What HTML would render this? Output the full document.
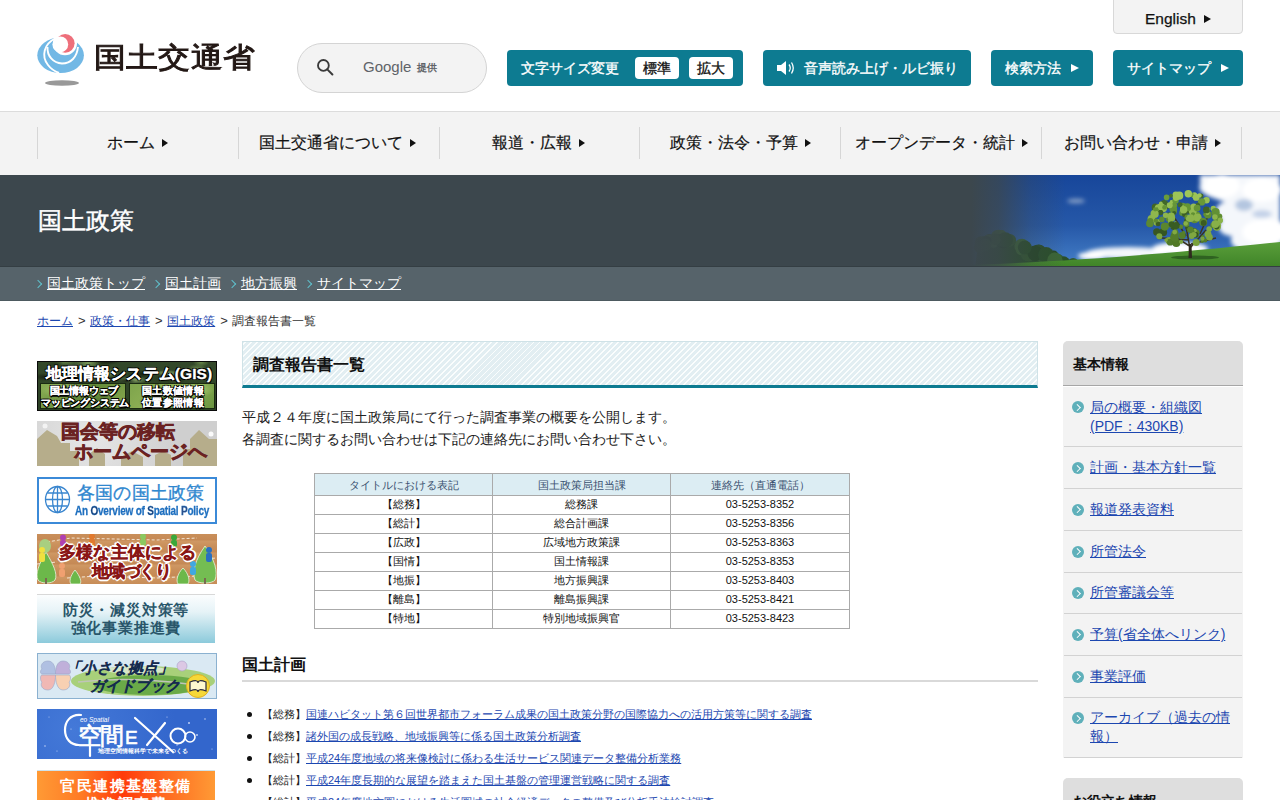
<!DOCTYPE html>
<html lang="ja">
<head>
<meta charset="utf-8">
<title>調査報告書一覧 - 国土政策</title>
<style>
*{box-sizing:border-box;margin:0;padding:0}
html,body{width:1280px;height:800px;overflow:hidden;background:#fff}
body{font-family:"Liberation Sans",sans-serif;color:#222;position:relative}
.abs{position:absolute}
a{color:#1c47b0}
/* header */
#hdr{position:absolute;left:0;top:0;width:1280px;height:112px;background:#fff;border-bottom:1px solid #dcdcdc}
.logo-text{position:absolute;left:94px;top:35px;font-size:32px;line-height:44px;color:#231815;-webkit-text-stroke:1.1px #231815;letter-spacing:0.2px;transform:scaleY(0.88);transform-origin:0 22px}
.search{position:absolute;left:297px;top:43px;width:190px;height:50px;border:1px solid #d4d4d4;border-radius:25px;background:#f3f3f3}
.btn{position:absolute;top:50px;height:36px;background:#0d7b91;border-radius:4px;color:#fff;font-size:14px;line-height:36px;-webkit-text-stroke:0.35px #fff}
.btn .t{position:absolute;top:0;white-space:nowrap}
.tri{position:absolute;width:0;height:0;border-style:solid}
.wbox{position:absolute;top:7px;width:44px;height:22px;background:#fff;border-radius:4px;color:#111;font-size:14px;line-height:22px;text-align:center;-webkit-text-stroke:0.35px #111}
#eng{position:absolute;left:1113px;top:-4px;width:130px;height:38px;background:#f3f3f3;border:1px solid #d8d8d8;border-radius:0 0 4px 4px}
/* nav */
#nav{position:absolute;left:0;top:112px;width:1280px;height:63px;background:#f3f3f3}
.sep{position:absolute;top:15px;width:1px;height:32px;background:#d6d6d6}
.nt{display:inline-block;width:0;height:0;border-style:solid;border-width:4px 0 4px 6.5px;border-color:transparent transparent transparent #111;margin-left:7px;vertical-align:1px}
.nv{position:absolute;top:0;height:63px;line-height:62px;font-size:16px;color:#111;white-space:nowrap;-webkit-text-stroke:0.2px #111}
/* banner */
#ban{position:absolute;left:0;top:175px;width:1280px;height:92px;background:#3c474d;overflow:hidden}
#subnav{position:absolute;left:0;top:267px;width:1280px;height:34px;background:#56636a;border-bottom:1px solid #4d5a60}
#ban:after{content:"";position:absolute;left:0;bottom:0;width:1280px;height:1px;background:#343e43}
.sn{position:absolute;top:0;line-height:32px;font-size:14px;color:#fff;white-space:nowrap}
.sn a{color:#fff}
.chev{position:absolute;top:13.5px;width:6px;height:6px;border-right:1.5px solid #5fc0cc;border-top:1.5px solid #5fc0cc;transform:rotate(45deg)}
/* breadcrumb */
.gt{font-weight:normal;font-size:13px;margin:0 4.5px 0 5px}
.bc{position:absolute;left:37px;top:312px;font-size:12px;line-height:18px;color:#333;white-space:nowrap}
/* main */
.h1box{position:absolute;left:242px;top:341px;width:796px;height:47px;border:1px solid #cfe2e7;border-bottom:3px solid #0d7b91;
background:repeating-linear-gradient(-45deg,#e2eef2 0,#e2eef2 2.9px,#fafdfd 2.9px,#fafdfd 4.25px)}
.h1box h1{position:absolute;left:10px;top:1px;line-height:44px;font-size:16px;font-weight:bold;color:#111}
.p{position:absolute;left:242px;font-size:14px;line-height:22px;color:#222;white-space:nowrap}
table.t{position:absolute;left:314px;top:473px;width:536px;border-collapse:collapse;table-layout:fixed;font-size:11px;color:#111}
table.t td,table.t th{border:1px solid #aaa;text-align:center;height:19px;line-height:16px;padding:0;vertical-align:top;font-weight:normal}
table.t th{background:#dcedf3;color:#3a5170;height:22px;padding-top:3px}
.h2{position:absolute;left:242px;top:650px;width:796px;height:32px;border-bottom:2px solid #d9d9d9}
.h2 span{position:absolute;left:0;top:1.5px;font-size:16px;font-weight:bold;line-height:26px;color:#111}
ul.lst{position:absolute;left:242px;top:703px;list-style:none;font-size:11px;color:#222}
.bk{margin-left:-4.5px}.bk2{margin-right:0.5px}
ul.lst li{position:relative;height:22.1px;line-height:22px;padding-left:24px;white-space:nowrap}
ul.lst li:before{content:"";position:absolute;left:5px;top:9px;width:5px;height:5px;border-radius:50%;background:#111}
/* sidebar */
.side{position:absolute;left:1063px;width:180px;background:#f3f3f3;border-radius:5px 5px 0 0}
.side .hd{height:45px;background:#dedede;border-bottom:1px solid #a6a6a6;box-shadow:0 1px 0 #fff;border-radius:5px 5px 0 0;font-size:14px;font-weight:bold;line-height:46px;padding-left:10px;color:#111}
.side .it{position:relative;border-bottom:1px solid #d2d2d2;margin:0 1px;padding:10.85px 10px 10.85px 26px;font-size:14px;line-height:19px}
.side .hd+.it{padding-top:11.6px}
.side .hd+.it:before{top:15.4px}.side .hd+.it:after{top:18.9px}
.side .it:before{content:"";position:absolute;left:8px;top:14.7px;width:12px;height:12px;border-radius:50%;background:#5fb0ba}
.side .it:after{content:"";position:absolute;left:11px;top:18.2px;width:3.6px;height:3.6px;border-right:1.1px solid #fff;border-top:1.1px solid #fff;transform:rotate(45deg)}
/* left banners */
.bn{position:absolute;left:37px;width:180px;overflow:hidden}
.gtx{color:#fff;font-weight:bold;white-space:nowrap;text-shadow:0 0 1px #000,1px 1px 0 #000,-1px -1px 0 #000,1px -1px 0 #000,-1px 1px 0 #000}
.gtx2{color:#fff;font-weight:bold;white-space:nowrap;text-shadow:1px 1px 0 #000,-1px -1px 0 #000,1px -1px 0 #000,-1px 1px 0 #000,0 1.5px 0 #000,1.5px 0 0 #000}
.wtx{color:#8a1616;font-weight:bold;white-space:nowrap;-webkit-text-stroke:0.4px #8a1616;text-shadow:1.3px 1.3px 0 #fff,-1.3px -1.3px 0 #fff,1.3px -1.3px 0 #fff,-1.3px 1.3px 0 #fff,0 1.6px 0 #fff,1.6px 0 0 #fff,0 -1.6px 0 #fff,-1.6px 0 0 #fff}
</style>
</head>
<body>
<div id="hdr">
  <svg class="abs" style="left:30px;top:28px" width="62" height="62" viewBox="30 28 62 62">
    <ellipse cx="62" cy="83" rx="17" ry="2.8" fill="#999"/>
    <ellipse cx="60.6" cy="55.3" rx="23.3" ry="17.8" fill="#72b8e5"/>
    <path d="M72 30 L76 38 C78 39 80 41 84 43 L90 30 Z" fill="#fff"/>
    <circle cx="65" cy="43.3" r="12" fill="#fff"/>
    <path d="M55 38.5 C44 44 41 56 48 65 C51 69 55 71.5 59 73" fill="none" stroke="#fff" stroke-width="1.9"/>
    <path d="M47.5 47 C47 56 53 63 62 63.5 C71 63.5 77 57 78 47" fill="none" stroke="#fff" stroke-width="1.9"/>
    <circle cx="65.2" cy="43.3" r="9.4" fill="#ee6f7b"/>
    <circle cx="60.3" cy="44.4" r="7.9" fill="#fff"/>
  </svg>
  <div class="logo-text">国土交通省</div>
  <div class="search">
    <svg class="abs" style="left:18px;top:14px" width="20" height="20" viewBox="0 0 20 20"><circle cx="7.4" cy="7.4" r="5.4" fill="none" stroke="#3a3a3a" stroke-width="1.85"/><path d="M11.3 11.4 L16.4 16.5" stroke="#3a3a3a" stroke-width="2" stroke-linecap="round"/></svg>
    <div class="abs" style="left:65px;top:13px;font-size:15px;line-height:20px;color:#5f6368">Google</div>
    <div class="abs" style="left:119px;top:17px;font-size:10px;line-height:14px;color:#5f6368;font-weight:bold">提供</div>
  </div>
  <div class="btn" style="left:507px;width:236px">
    <span class="t" style="left:14px">文字サイズ変更</span>
    <div class="wbox" style="left:128px">標準</div>
    <div class="wbox" style="left:182px">拡大</div>
  </div>
  <div class="btn" style="left:763px;width:208px">
    <svg class="abs" style="left:13px;top:10px" width="20" height="16" viewBox="0 0 20 16"><path d="M1 5 H5 L10 1 V15 L5 11 H1 Z" fill="#fff"/><path d="M13 4.5 Q15.5 8 13 11.5" fill="none" stroke="#fff" stroke-width="1.3"/><path d="M15.5 2.5 Q19 8 15.5 13.5" fill="none" stroke="#fff" stroke-width="1.3"/></svg>
    <span class="t" style="left:41px">音声読み上げ・ルビ振り</span>
  </div>
  <div class="btn" style="left:991px;width:102px">
    <span class="t" style="left:14px">検索方法</span>
    <div class="tri" style="left:80px;top:14px;border-width:4.5px 0 4.5px 8px;border-color:transparent transparent transparent #fff"></div>
  </div>
  <div class="btn" style="left:1113px;width:130px">
    <span class="t" style="left:14px">サイトマップ</span>
    <div class="tri" style="left:108px;top:14px;border-width:4.5px 0 4.5px 8px;border-color:transparent transparent transparent #fff"></div>
  </div>
  <div id="eng">
    <div class="abs" style="left:31px;top:11px;font-size:15.5px;line-height:22px;color:#111;-webkit-text-stroke:0.25px #111">English</div>
    <div class="tri" style="left:90px;top:17.5px;border-width:4px 0 4px 7px;border-color:transparent transparent transparent #111"></div>
  </div>
</div>

<div id="nav">
  <div class="sep" style="left:37px"></div>
  <div class="sep" style="left:238px"></div>
  <div class="sep" style="left:439px"></div>
  <div class="sep" style="left:639px"></div>
  <div class="sep" style="left:840px"></div>
  <div class="sep" style="left:1041px"></div>
  <div class="sep" style="left:1241px"></div>
  <div class="nv" style="left:107px">ホーム<i class="nt"></i></div>
  <div class="nv" style="left:259px">国土交通省について<i class="nt"></i></div>
  <div class="nv" style="left:492px">報道・広報<i class="nt"></i></div>
  <div class="nv" style="left:670px">政策・法令・予算<i class="nt"></i></div>
  <div class="nv" style="left:855px">オープンデータ・統計<i class="nt"></i></div>
  <div class="nv" style="left:1064px">お問い合わせ・申請<i class="nt"></i></div>
</div>

<div id="ban">
  <svg class="abs" style="left:960px;top:0" width="320" height="92" viewBox="960 175 320 92">
    <defs>
      <linearGradient id="sky" x1="0" y1="0" x2="0" y2="1">
        <stop offset="0" stop-color="#17469a"/><stop offset="0.55" stop-color="#2658a8"/><stop offset="1" stop-color="#4580c8"/>
      </linearGradient>
      <linearGradient id="fade" x1="0" y1="0" x2="1" y2="0">
        <stop offset="0" stop-color="#3c474d" stop-opacity="1"/><stop offset="0.035" stop-color="#3c474d" stop-opacity="1"/><stop offset="0.12" stop-color="#3c474d" stop-opacity="0.8"/><stop offset="0.22" stop-color="#3c474d" stop-opacity="0.3"/><stop offset="0.33" stop-color="#3c474d" stop-opacity="0"/>
      </linearGradient>
      <linearGradient id="grass" x1="0" y1="0" x2="0" y2="1">
        <stop offset="0" stop-color="#5a9e3a"/><stop offset="1" stop-color="#3f8428"/>
      </linearGradient>
      <filter id="bl1" x="-20%" y="-20%" width="140%" height="140%"><feGaussianBlur stdDeviation="2.2"/></filter>
      <filter id="bl2" x="-20%" y="-20%" width="140%" height="140%"><feGaussianBlur stdDeviation="0.7"/></filter>
    </defs>
    <rect x="960" y="175" width="320" height="92" fill="url(#sky)"/>
    <g filter="url(#bl1)">
      <path d="M1200 175 L1280 175 L1280 250 L1250 252 C1235 250 1228 244 1232 236 C1222 236 1214 228 1222 220 C1212 214 1215 204 1225 202 C1214 198 1196 194 1200 185 Z" fill="#f4f7fb"/>
      <ellipse cx="1222" cy="186" rx="18" ry="12" fill="#ffffff"/>
      <ellipse cx="1266" cy="232" rx="24" ry="13" fill="#ffffff"/>
      <ellipse cx="1262" cy="190" rx="20" ry="12" fill="#ffffff"/>
      <ellipse cx="1244" cy="205" rx="9" ry="6" fill="#b4c6e0"/>
      <ellipse cx="1262" cy="214" rx="10" ry="4" fill="#c4d2e8"/>
      <ellipse cx="1128" cy="253" rx="42" ry="6" fill="#f4f7fb"/>
      <ellipse cx="1180" cy="249" rx="28" ry="7" fill="#ffffff"/>
      <ellipse cx="1092" cy="256" rx="14" ry="4" fill="#ffffff"/>
      <ellipse cx="1076" cy="201" rx="9" ry="2.5" fill="#7f9ac4"/>
    </g>
    <g filter="url(#bl2)">
      <path d="M975 267 L978 245 L1000 236 L1072 262 L1080 267 Z" fill="#2b4f2c"/>
      <circle cx="1021.9" cy="249.3" r="6.2" fill="#3a6634"/>
      <circle cx="1021.8" cy="246.1" r="7.4" fill="#3a6634"/>
      <circle cx="1039.1" cy="252.0" r="7.2" fill="#264628"/>
      <circle cx="991.8" cy="243.4" r="6.2" fill="#2b4f2c"/>
      <circle cx="1035.8" cy="251.2" r="5.6" fill="#30592f"/>
      <circle cx="1038.4" cy="251.7" r="7.3" fill="#2b4f2c"/>
      <circle cx="996.5" cy="235.4" r="5.0" fill="#3a6634"/>
      <circle cx="1009.7" cy="240.3" r="6.4" fill="#30592f"/>
      <circle cx="1040.1" cy="254.6" r="6.0" fill="#3a6634"/>
      <circle cx="1041.5" cy="254.1" r="5.6" fill="#2b4f2c"/>
      <circle cx="1046.7" cy="253.8" r="5.3" fill="#264628"/>
      <circle cx="980.9" cy="242.6" r="6.3" fill="#2b4f2c"/>
      <circle cx="1060.1" cy="263.7" r="5.5" fill="#2b4f2c"/>
      <circle cx="998.7" cy="237.5" r="7.7" fill="#3a6634"/>
      <circle cx="1073.1" cy="263.5" r="5.6" fill="#30592f"/>
      <circle cx="1053.5" cy="255.5" r="5.1" fill="#264628"/>
      <circle cx="979.5" cy="247.4" r="5.6" fill="#30592f"/>
      <circle cx="1001.9" cy="234.5" r="4.4" fill="#3a6634"/>
      <circle cx="995.2" cy="239.6" r="6.2" fill="#30592f"/>
      <circle cx="1073.6" cy="267.3" r="7.1" fill="#3a6634"/>
      <circle cx="989.3" cy="239.7" r="5.7" fill="#264628"/>
      <circle cx="1061.8" cy="264.6" r="7.9" fill="#2b4f2c"/>
      <circle cx="998.4" cy="240.2" r="5.6" fill="#2b4f2c"/>
      <circle cx="982.1" cy="242.5" r="4.6" fill="#2b4f2c"/>
      <circle cx="1053.0" cy="256.7" r="5.3" fill="#2b4f2c"/>
      <circle cx="985.2" cy="242.8" r="4.8" fill="#2b4f2c"/>
      <circle cx="1036.3" cy="251.4" r="5.5" fill="#3a6634"/>
      <circle cx="1058.7" cy="258.8" r="4.5" fill="#30592f"/>
      <circle cx="1008.1" cy="240.8" r="4.9" fill="#30592f"/>
      <circle cx="993.4" cy="241.2" r="6.5" fill="#3a6634"/>
      <circle cx="1063.6" cy="262.7" r="6.4" fill="#2b4f2c"/>
      <circle cx="988.6" cy="240.6" r="6.0" fill="#3a6634"/>
      <circle cx="1002.9" cy="241.0" r="7.3" fill="#264628"/>
      <circle cx="1028.4" cy="253.7" r="7.7" fill="#30592f"/>
      <circle cx="1000.2" cy="240.4" r="6.2" fill="#2b4f2c"/>
      <circle cx="1005.2" cy="239.9" r="7.7" fill="#2b4f2c"/>
      <circle cx="984.7" cy="241.5" r="5.6" fill="#2b4f2c"/>
      <circle cx="995.1" cy="239.6" r="5.5" fill="#30592f"/>
      <circle cx="986.9" cy="240.8" r="4.6" fill="#264628"/>
      <circle cx="1041.7" cy="255.5" r="6.8" fill="#30592f"/>
      <circle cx="1035.2" cy="253.3" r="7.7" fill="#264628"/>
      <circle cx="1046.0" cy="254.9" r="7.9" fill="#2b4f2c"/>
      <circle cx="1024.8" cy="247.5" r="6.9" fill="#2b4f2c"/>
      <circle cx="985.3" cy="244.8" r="6.2" fill="#30592f"/>
      <circle cx="1054.9" cy="260.2" r="7.7" fill="#3a6634"/>
    </g>
    <path d="M960 267 L960 265 C1040 263 1150 256 1280 242 L1280 267 Z" fill="url(#grass)"/>
    <ellipse cx="1195" cy="257.5" rx="24" ry="2" fill="#2a5a1e" opacity="0.85"/>
    <path d="M1190 258 L1189.5 246 L1174 236 M1189.5 246 L1186 226 M1190 248 L1206 230 M1191 244 L1216 238 M1189 240 L1162 238 M1186 236 L1172 214 M1200 234 L1210 212" stroke="#3a3424" stroke-width="1.5" fill="none"/>
    <path d="M1188.5 258 L1189 244 L1191.5 244 L1192 258 Z" fill="#2e2a1e"/>
    <g filter="url(#bl2)">
      <circle cx="1193.8" cy="231.6" r="3.7" fill="rgb(55,87,33)"/>
      <circle cx="1202.3" cy="241.0" r="1.9" fill="rgb(82,123,41)"/>
      <circle cx="1216.9" cy="226.7" r="4.0" fill="rgb(134,174,70)"/>
      <circle cx="1182.8" cy="205.8" r="3.1" fill="rgb(102,150,55)"/>
      <circle cx="1169.1" cy="240.6" r="3.6" fill="rgb(123,163,62)"/>
      <circle cx="1206.4" cy="200.2" r="3.3" fill="rgb(154,194,85)"/>
      <circle cx="1164.1" cy="204.2" r="4.2" fill="rgb(65,103,41)"/>
      <circle cx="1187.8" cy="228.2" r="2.3" fill="rgb(56,89,34)"/>
      <circle cx="1213.3" cy="208.5" r="2.7" fill="rgb(148,188,81)"/>
      <circle cx="1170.7" cy="224.4" r="1.8" fill="rgb(91,135,47)"/>
      <circle cx="1173.3" cy="209.1" r="3.8" fill="rgb(100,147,53)"/>
      <circle cx="1171.7" cy="218.0" r="3.5" fill="rgb(140,180,75)"/>
      <circle cx="1203.0" cy="236.9" r="1.8" fill="rgb(84,126,43)"/>
      <circle cx="1175.4" cy="223.1" r="1.8" fill="rgb(136,176,72)"/>
      <circle cx="1163.1" cy="232.3" r="4.0" fill="rgb(54,87,33)"/>
      <circle cx="1173.8" cy="211.4" r="3.1" fill="rgb(99,145,52)"/>
      <circle cx="1156.8" cy="231.9" r="3.7" fill="rgb(55,87,33)"/>
      <circle cx="1155.6" cy="210.7" r="3.3" fill="rgb(63,99,39)"/>
      <circle cx="1173.5" cy="241.1" r="3.1" fill="rgb(123,163,62)"/>
      <circle cx="1171.8" cy="202.2" r="2.0" fill="rgb(152,192,84)"/>
      <circle cx="1220.0" cy="220.7" r="2.8" fill="rgb(138,178,73)"/>
      <circle cx="1191.8" cy="236.0" r="2.9" fill="rgb(126,166,65)"/>
      <circle cx="1151.4" cy="218.7" r="3.8" fill="rgb(140,180,75)"/>
      <circle cx="1194.4" cy="234.0" r="2.1" fill="rgb(128,168,66)"/>
      <circle cx="1159.7" cy="236.9" r="2.5" fill="rgb(84,126,43)"/>
      <circle cx="1219.3" cy="216.6" r="3.0" fill="rgb(96,141,50)"/>
      <circle cx="1183.5" cy="208.1" r="2.8" fill="rgb(148,188,81)"/>
      <circle cx="1218.1" cy="225.6" r="3.0" fill="rgb(134,174,71)"/>
      <circle cx="1155.4" cy="207.2" r="3.7" fill="rgb(64,101,40)"/>
      <circle cx="1175.0" cy="233.9" r="3.7" fill="rgb(86,128,44)"/>
      <circle cx="1196.8" cy="232.5" r="2.7" fill="rgb(87,129,44)"/>
      <circle cx="1169.2" cy="218.3" r="3.6" fill="rgb(95,140,50)"/>
      <circle cx="1170.2" cy="242.2" r="3.4" fill="rgb(81,122,41)"/>
      <circle cx="1149.8" cy="221.4" r="2.4" fill="rgb(93,138,49)"/>
      <circle cx="1182.3" cy="235.5" r="3.4" fill="rgb(85,127,43)"/>
      <circle cx="1174.0" cy="226.5" r="3.6" fill="rgb(57,90,35)"/>
      <circle cx="1174.2" cy="236.8" r="3.9" fill="rgb(84,126,43)"/>
      <circle cx="1186.3" cy="220.5" r="2.2" fill="rgb(59,94,37)"/>
      <circle cx="1216.5" cy="217.8" r="3.5" fill="rgb(95,140,50)"/>
      <circle cx="1201.6" cy="201.9" r="3.7" fill="rgb(104,153,56)"/>
      <circle cx="1196.9" cy="214.9" r="3.3" fill="rgb(97,143,51)"/>
      <circle cx="1194.9" cy="230.5" r="1.9" fill="rgb(131,171,68)"/>
      <circle cx="1180.8" cy="226.8" r="2.3" fill="rgb(90,133,46)"/>
      <circle cx="1194.4" cy="195.2" r="2.9" fill="rgb(158,198,88)"/>
      <circle cx="1171.8" cy="202.4" r="2.3" fill="rgb(152,192,84)"/>
      <circle cx="1182.5" cy="212.8" r="3.3" fill="rgb(98,144,52)"/>
      <circle cx="1166.1" cy="240.0" r="1.8" fill="rgb(123,163,62)"/>
      <circle cx="1169.1" cy="214.3" r="2.1" fill="rgb(61,97,38)"/>
      <circle cx="1175.9" cy="194.9" r="3.3" fill="rgb(158,198,88)"/>
      <circle cx="1188.3" cy="210.6" r="3.2" fill="rgb(63,99,39)"/>
      <circle cx="1207.9" cy="214.8" r="3.8" fill="rgb(97,143,51)"/>
      <circle cx="1175.6" cy="200.4" r="3.2" fill="rgb(105,154,57)"/>
      <circle cx="1192.8" cy="211.3" r="3.9" fill="rgb(145,185,79)"/>
      <circle cx="1156.8" cy="222.4" r="3.3" fill="rgb(137,177,73)"/>
      <circle cx="1180.1" cy="204.8" r="2.5" fill="rgb(65,103,41)"/>
      <circle cx="1176.3" cy="243.0" r="4.0" fill="rgb(81,121,40)"/>
      <circle cx="1184.7" cy="214.6" r="2.6" fill="rgb(61,97,38)"/>
      <circle cx="1184.4" cy="207.9" r="2.9" fill="rgb(148,188,81)"/>
      <circle cx="1193.8" cy="216.1" r="2.5" fill="rgb(96,142,51)"/>
      <circle cx="1187.3" cy="207.2" r="4.0" fill="rgb(101,149,54)"/>
      <circle cx="1166.7" cy="206.9" r="2.2" fill="rgb(64,101,40)"/>
      <circle cx="1170.1" cy="224.6" r="2.9" fill="rgb(91,135,47)"/>
      <circle cx="1192.5" cy="231.7" r="2.1" fill="rgb(87,130,45)"/>
      <circle cx="1170.6" cy="220.7" r="2.6" fill="rgb(138,178,73)"/>
      <circle cx="1187.2" cy="217.1" r="2.7" fill="rgb(96,141,50)"/>
      <circle cx="1191.5" cy="194.9" r="2.4" fill="rgb(108,158,59)"/>
      <circle cx="1188.3" cy="193.8" r="3.7" fill="rgb(159,199,89)"/>
      <circle cx="1190.4" cy="229.8" r="3.3" fill="rgb(88,131,45)"/>
      <circle cx="1214.6" cy="213.0" r="2.7" fill="rgb(62,98,39)"/>
      <circle cx="1163.1" cy="208.4" r="3.8" fill="rgb(148,188,81)"/>
      <circle cx="1209.2" cy="229.1" r="2.8" fill="rgb(132,172,69)"/>
      <circle cx="1205.2" cy="240.4" r="2.1" fill="rgb(82,123,41)"/>
      <circle cx="1188.5" cy="218.9" r="2.6" fill="rgb(140,180,75)"/>
      <circle cx="1191.2" cy="235.2" r="2.0" fill="rgb(127,167,65)"/>
      <circle cx="1208.0" cy="234.2" r="3.4" fill="rgb(128,168,66)"/>
      <circle cx="1164.8" cy="226.6" r="4.1" fill="rgb(90,134,47)"/>
      <circle cx="1158.7" cy="208.2" r="4.0" fill="rgb(148,188,81)"/>
      <circle cx="1193.0" cy="214.5" r="2.2" fill="rgb(97,143,51)"/>
      <circle cx="1176.3" cy="196.7" r="1.9" fill="rgb(107,157,58)"/>
      <circle cx="1202.4" cy="238.7" r="2.1" fill="rgb(124,164,63)"/>
      <circle cx="1171.6" cy="224.2" r="3.0" fill="rgb(57,91,35)"/>
      <circle cx="1175.9" cy="195.9" r="3.5" fill="rgb(157,197,88)"/>
      <circle cx="1194.5" cy="219.3" r="4.0" fill="rgb(94,139,49)"/>
      <circle cx="1193.7" cy="206.7" r="3.1" fill="rgb(149,189,82)"/>
      <circle cx="1203.0" cy="219.9" r="2.1" fill="rgb(139,179,74)"/>
      <circle cx="1175.7" cy="231.3" r="2.2" fill="rgb(87,130,45)"/>
      <circle cx="1196.2" cy="197.4" r="3.4" fill="rgb(156,196,87)"/>
      <circle cx="1158.0" cy="223.9" r="2.4" fill="rgb(58,92,36)"/>
      <circle cx="1183.6" cy="209.8" r="3.7" fill="rgb(147,187,80)"/>
      <circle cx="1201.2" cy="195.8" r="2.2" fill="rgb(68,108,44)"/>
      <circle cx="1198.0" cy="204.6" r="2.1" fill="rgb(65,103,41)"/>
      <circle cx="1196.9" cy="235.7" r="2.1" fill="rgb(85,127,43)"/>
      <circle cx="1174.5" cy="205.2" r="2.6" fill="rgb(102,150,55)"/>
      <circle cx="1174.1" cy="213.1" r="2.1" fill="rgb(62,98,39)"/>
      <circle cx="1195.6" cy="234.8" r="2.8" fill="rgb(53,85,32)"/>
      <circle cx="1186.3" cy="223.8" r="3.2" fill="rgb(92,136,48)"/>
      <circle cx="1177.5" cy="198.0" r="1.9" fill="rgb(156,196,87)"/>
      <circle cx="1183.6" cy="232.5" r="1.8" fill="rgb(87,129,44)"/>
      <circle cx="1213.1" cy="225.2" r="2.8" fill="rgb(91,135,47)"/>
      <circle cx="1160.5" cy="212.5" r="2.7" fill="rgb(62,98,39)"/>
      <circle cx="1160.0" cy="206.2" r="2.5" fill="rgb(149,189,82)"/>
      <circle cx="1169.7" cy="205.2" r="3.0" fill="rgb(150,190,82)"/>
      <circle cx="1215.6" cy="212.2" r="4.1" fill="rgb(98,145,52)"/>
      <circle cx="1197.5" cy="217.5" r="4.1" fill="rgb(141,181,75)"/>
      <circle cx="1197.1" cy="208.1" r="3.4" fill="rgb(101,148,54)"/>
      <circle cx="1160.8" cy="203.5" r="1.9" fill="rgb(151,191,83)"/>
      <circle cx="1154.6" cy="213.9" r="4.1" fill="rgb(143,183,77)"/>
      <circle cx="1171.5" cy="217.3" r="2.5" fill="rgb(95,141,50)"/>
      <circle cx="1200.7" cy="201.5" r="2.4" fill="rgb(105,153,56)"/>
      <circle cx="1216.7" cy="226.6" r="2.8" fill="rgb(57,90,35)"/>
      <circle cx="1205.1" cy="214.3" r="1.9" fill="rgb(97,143,51)"/>
      <circle cx="1220.3" cy="220.0" r="2.6" fill="rgb(139,179,74)"/>
      <circle cx="1177.6" cy="196.1" r="2.4" fill="rgb(157,197,88)"/>
      <circle cx="1171.0" cy="195.7" r="1.9" fill="rgb(68,108,44)"/>
      <circle cx="1161.9" cy="219.4" r="2.8" fill="rgb(94,139,49)"/>
      <circle cx="1155.1" cy="209.3" r="2.1" fill="rgb(100,147,53)"/>
      <circle cx="1215.3" cy="224.1" r="3.9" fill="rgb(136,176,72)"/>
      <circle cx="1150.3" cy="221.1" r="3.0" fill="rgb(93,138,49)"/>
      <circle cx="1176.1" cy="225.5" r="3.5" fill="rgb(57,91,35)"/>
      <circle cx="1171.1" cy="216.4" r="3.8" fill="rgb(142,182,76)"/>
      <circle cx="1157.3" cy="209.2" r="2.0" fill="rgb(100,147,53)"/>
      <circle cx="1208.0" cy="209.3" r="2.1" fill="rgb(147,187,80)"/>
      <circle cx="1166.6" cy="197.4" r="2.8" fill="rgb(107,156,58)"/>
      <circle cx="1199.4" cy="195.5" r="2.3" fill="rgb(158,198,88)"/>
      <circle cx="1175.9" cy="198.1" r="2.8" fill="rgb(156,196,87)"/>
      <circle cx="1203.2" cy="221.9" r="4.0" fill="rgb(93,137,48)"/>
      <circle cx="1203.7" cy="222.9" r="2.9" fill="rgb(58,92,36)"/>
      <circle cx="1196.2" cy="242.6" r="3.5" fill="rgb(121,161,61)"/>
      <circle cx="1207.5" cy="212.9" r="2.1" fill="rgb(144,184,78)"/>
      <circle cx="1161.2" cy="206.7" r="3.4" fill="rgb(149,189,82)"/>
      <circle cx="1189.1" cy="194.4" r="1.9" fill="rgb(158,198,89)"/>
      <circle cx="1174.7" cy="237.7" r="4.1" fill="rgb(84,125,42)"/>
      <circle cx="1165.6" cy="215.3" r="2.7" fill="rgb(142,182,77)"/>
      <circle cx="1149.9" cy="223.4" r="3.8" fill="rgb(92,136,48)"/>
      <circle cx="1155.9" cy="220.6" r="2.2" fill="rgb(94,138,49)"/>
      <circle cx="1181.1" cy="241.8" r="2.1" fill="rgb(122,162,61)"/>
      <circle cx="1214.9" cy="217.0" r="2.8" fill="rgb(141,181,76)"/>
      <circle cx="1179.2" cy="195.7" r="4.1" fill="rgb(157,197,88)"/>
      <circle cx="1190.5" cy="218.1" r="3.9" fill="rgb(140,180,75)"/>
      <circle cx="1164.5" cy="207.4" r="2.3" fill="rgb(101,148,54)"/>
      <circle cx="1174.7" cy="232.1" r="2.4" fill="rgb(129,169,67)"/>
      <circle cx="1209.5" cy="237.2" r="3.3" fill="rgb(126,166,64)"/>
      <circle cx="1159.3" cy="236.2" r="3.0" fill="rgb(126,166,65)"/>
      <circle cx="1206.4" cy="209.9" r="3.4" fill="rgb(63,100,40)"/>
      <circle cx="1193.9" cy="234.6" r="2.7" fill="rgb(127,167,65)"/>
      <circle cx="1185.8" cy="223.5" r="2.2" fill="rgb(136,176,72)"/>
    </g>
    <rect x="960" y="175" width="320" height="92" fill="url(#fade)"/>
  </svg>
  <div class="abs" style="left:37.5px;top:21px;font-size:24.2px;line-height:50px;color:#fff;-webkit-text-stroke:0.45px #fff">国土政策</div>
</div>
<div id="subnav">
  <div class="chev" style="left:34.5px"></div><div class="sn" style="left:47px"><a href="#">国土政策トップ</a></div>
  <div class="chev" style="left:152.5px"></div><div class="sn" style="left:165px"><a href="#">国土計画</a></div>
  <div class="chev" style="left:228.5px"></div><div class="sn" style="left:241px"><a href="#">地方振興</a></div>
  <div class="chev" style="left:304.5px"></div><div class="sn" style="left:317px"><a href="#">サイトマップ</a></div>
</div>

<div class="bc"><a href="#">ホーム</a><b class="gt">&gt;</b><a href="#">政策・仕事</a><b class="gt">&gt;</b><a href="#">国土政策</a><b class="gt">&gt;</b>調査報告書一覧</div>

<!-- main -->
<div class="h1box"><h1>調査報告書一覧</h1></div>
<div class="p" style="top:406px">平成２４年度に国土政策局にて行った調査事業の概要を公開します。</div>
<div class="p" style="top:428px">各調査に関するお問い合わせは下記の連絡先にお問い合わせ下さい。</div>

<table class="t"><colgroup><col style="width:178px"><col style="width:178px"><col style="width:179px"></colgroup>
<tr><th>タイトルにおける表記</th><th>国土政策局担当課</th><th>連絡先（直通電話）</th></tr>
<tr><td>【総務】</td><td>総務課</td><td>03-5253-8352</td></tr>
<tr><td>【総計】</td><td>総合計画課</td><td>03-5253-8356</td></tr>
<tr><td>【広政】</td><td>広域地方政策課</td><td>03-5253-8363</td></tr>
<tr><td>【国情】</td><td>国土情報課</td><td>03-5253-8353</td></tr>
<tr><td>【地振】</td><td>地方振興課</td><td>03-5253-8403</td></tr>
<tr><td>【離島】</td><td>離島振興課</td><td>03-5253-8421</td></tr>
<tr><td>【特地】</td><td>特別地域振興官</td><td>03-5253-8423</td></tr>
</table>

<div class="h2"><span>国土計画</span></div>
<ul class="lst">
<li><span class="bk">【</span>総務<span class="bk2">】</span><a href="#">国連ハビタット第６回世界都市フォーラム成果の国土政策分野の国際協力への活用方策等に関する調査</a></li>
<li><span class="bk">【</span>総務<span class="bk2">】</span><a href="#">諸外国の成長戦略、地域振興等に係る国土政策分析調査</a></li>
<li><span class="bk">【</span>総計<span class="bk2">】</span><a href="#">平成24年度地域の将来像検討に係わる生活サービス関連データ整備分析業務</a></li>
<li><span class="bk">【</span>総計<span class="bk2">】</span><a href="#">平成24年度長期的な展望を踏まえた国土基盤の管理運営戦略に関する調査</a></li>
<li><span class="bk">【</span>総計<span class="bk2">】</span><a href="#">平成24年度地方圏における生活圏域の社会経済データの整備及び分析手法検討調査</a></li>
</ul>

<!-- sidebar -->
<div class="side" style="top:341px">
  <div class="hd">基本情報</div>
  <div class="it"><a href="#">局の概要・組織図<br>(PDF：430KB)</a></div>
  <div class="it"><a href="#">計画・基本方針一覧</a></div>
  <div class="it"><a href="#">報道発表資料</a></div>
  <div class="it"><a href="#">所管法令</a></div>
  <div class="it"><a href="#">所管審議会等</a></div>
  <div class="it"><a href="#">予算(省全体へリンク)</a></div>
  <div class="it"><a href="#">事業評価</a></div>
  <div class="it"><a href="#">アーカイブ（過去の情報）</a></div>
</div>
<div class="side" style="top:778px;height:60px">
  <div class="hd">お役立ち情報</div>
</div>

<!-- left banners -->
<div class="bn" style="top:361px;height:50px;background:#17200f;border:1px solid #0a0a0a">
  <div class="abs" style="left:0;top:0;width:178px;height:48px;background:radial-gradient(ellipse 9px 5px at 42px 10px,#6a8a4c 0,transparent 100%),radial-gradient(ellipse 15px 4px at 103px 12px,#1a2414 0,transparent 100%),radial-gradient(ellipse 10px 6px at 41px 19px,#2a3a20 0,transparent 100%),radial-gradient(ellipse 8px 3px at 70px 17px,#1a2414 0,transparent 100%),radial-gradient(ellipse 13px 3px at 69px 0px,#1a2414 0,transparent 100%),radial-gradient(ellipse 14px 4px at 7px 15px,#1a2414 0,transparent 100%),radial-gradient(ellipse 13px 6px at 127px 17px,#2a3a20 0,transparent 100%),radial-gradient(ellipse 15px 3px at 129px 11px,#8aa868 0,transparent 100%),radial-gradient(ellipse 8px 6px at 17px 2px,#2a3a20 0,transparent 100%),radial-gradient(ellipse 10px 6px at 138px 17px,#1a2414 0,transparent 100%),radial-gradient(ellipse 11px 6px at 62px 11px,#6a8a4c 0,transparent 100%),radial-gradient(ellipse 8px 5px at 163px 0px,#6a8a4c 0,transparent 100%),radial-gradient(ellipse 15px 6px at 29px 17px,#1a2414 0,transparent 100%),radial-gradient(ellipse 12px 6px at 18px 13px,#8aa868 0,transparent 100%),radial-gradient(ellipse 14px 6px at 50px 1px,#7a9a5a 0,transparent 100%),radial-gradient(ellipse 14px 3px at 61px 1px,#2a3a20 0,transparent 100%),radial-gradient(ellipse 6px 5px at 136px 17px,#7a9a5a 0,transparent 100%),radial-gradient(ellipse 11px 6px at 67px 11px,#8aa868 0,transparent 100%),radial-gradient(ellipse 9px 3px at 89px 19px,#1a2414 0,transparent 100%),radial-gradient(ellipse 15px 4px at 95px 18px,#8aa868 0,transparent 100%),radial-gradient(ellipse 14px 4px at 27px 0px,#5e7e44 0,transparent 100%),radial-gradient(ellipse 10px 5px at 159px 7px,#6a8a4c 0,transparent 100%),linear-gradient(#33482a,#2c4024)"></div>
  <div class="abs gis1" style="left:2px;top:21px;width:86px;height:26px;border:1px solid #1a2a12;background:radial-gradient(ellipse 20px 8px at 20px 6px,#a8c870 0,transparent 100%),radial-gradient(ellipse 18px 8px at 60px 18px,#4e7430 0,transparent 100%),linear-gradient(135deg,#89ad54,#628838 50%,#88aa4e)"></div>
  <div class="abs gis1" style="left:91px;top:21px;width:86px;height:26px;border:1px solid #1a2a12;background:radial-gradient(ellipse 22px 9px at 30px 18px,#4e7430 0,transparent 100%),radial-gradient(ellipse 18px 8px at 66px 6px,#a8c870 0,transparent 100%),linear-gradient(135deg,#7ea44c,#94b658 50%,#6a9440)"></div>
  <div class="abs gtx" style="left:8px;top:2.5px;font-size:15.5px;line-height:18px;letter-spacing:0.1px;-webkit-text-stroke:0.3px #fff">地理情報システム(GIS)</div>
  <div class="abs gtx2" style="left:3px;top:23px;width:86px;text-align:center;font-size:9.5px;line-height:12px;letter-spacing:-0.2px;-webkit-text-stroke:0.3px #fff">国土情報ウェブ<br>マッピングシステム</div>
  <div class="abs gtx2" style="left:92px;top:23px;width:86px;text-align:center;font-size:9.5px;line-height:12px;letter-spacing:0.4px;-webkit-text-stroke:0.3px #fff">国土数値情報<br>位置参照情報</div>
</div>
<div class="bn" style="top:421px;height:45px;background:radial-gradient(circle at 30% 40%,#e6e6e6,#cfcfcf 70%);">
  <svg class="abs" style="left:0;top:0" width="180" height="45" viewBox="0 0 180 45">
    <path d="M0 45 V18 L10 9 L20 15 L24 22 L33 22 L33 45 Z" fill="#b6ad8b"/>
    <path d="M33 45 V30 L42 30 V45 Z" fill="#b6ad8b"/>
    <path d="M52 45 V33 L60 27 L68 33 V45 Z" fill="#b6ad8b"/>
    <path d="M84 45 V36 L95 30 L106 36 V45 Z" fill="#b6ad8b"/>
    <path d="M118 45 V34 L126 30 L134 34 V45 Z" fill="#b6ad8b"/>
    <path d="M146 45 V28 L153 28 V18 L162 9 L172 18 L180 18 V45 Z" fill="#b6ad8b"/>
    <circle cx="8" cy="5" r="2.5" fill="#f3f3f3"/><circle cx="174" cy="13" r="2.5" fill="#fafafa"/>
  </svg>
  <div class="abs" style="left:24px;top:1px;font-size:19px;line-height:20px;color:#6b2222;font-family:'Liberation Serif',serif;font-weight:bold;letter-spacing:0;white-space:nowrap;-webkit-text-stroke:0.7px #6b2222">国会等の移転</div>
  <div class="abs" style="left:37px;top:21px;font-size:19px;line-height:20px;color:#6b2222;font-family:'Liberation Serif',serif;font-weight:bold;letter-spacing:0;white-space:nowrap;-webkit-text-stroke:0.7px #6b2222">ホームページへ</div>
</div>
<div class="bn" style="top:477px;height:47px;border:2px solid #3b8ad8;background:#fff">
  <svg class="abs" style="left:5px;top:6px" width="28" height="29" viewBox="0 0 28 29">
    <g fill="none" stroke="#3a86cf" stroke-width="1.3"><ellipse cx="13.5" cy="14.5" rx="12" ry="13"/><ellipse cx="13.5" cy="14.5" rx="5" ry="13"/><path d="M13.5 1.5 V27.5 M1.5 14.5 H25.5 M3.5 8 H23.5 M3.5 21 H23.5"/></g>
  </svg>
  <div class="abs" style="left:38px;top:4px;font-size:17.5px;line-height:20px;color:#2f87cf;white-space:nowrap;letter-spacing:0.2px;-webkit-text-stroke:0.35px #2f87cf">各国の国土政策</div>
  <div class="abs" style="left:36px;top:25px;font-size:13px;line-height:14px;color:#1e6fbf;font-weight:bold;white-space:nowrap;transform:scaleX(0.77);transform-origin:0 0;letter-spacing:-0.3px;-webkit-text-stroke:0.3px #1e6fbf">An <span style="color:#173f78">O</span>verview of <span style="color:#173f78">S</span>patial <span style="color:#2a4f8a">P</span>olicy</div>
</div>
<div class="bn" style="top:534px;height:50px;background:repeating-linear-gradient(180deg,#c98f5a 0,#c58955 6px,#cf9864 7px,#c98f5a 12px)">
  <svg class="abs" style="left:0;top:0" width="180" height="50" viewBox="0 0 180 50">
    <path d="M10 8 L34 4 L120 6 L160 4 M0 30 L20 28 M150 26 L180 24 M30 44 L60 42 L120 44 L160 42" stroke="#f4e6d4" stroke-width="1" stroke-dasharray="3 2" fill="none"/>
    <path d="M9 18 C2 30 -2 40 1 46 C4 50 15 50 18 46 C21 40 16 30 9 18 Z" fill="#6cb84a" stroke="#e8f4e0" stroke-width="0.8"/><rect x="8" y="44" width="2" height="6" fill="#7a6a50"/>
    <path d="M38 36 C33 42 32 48 34 50 H43 C45 48 43 42 38 36 Z" fill="#6cb84a" stroke="#e8f4e0" stroke-width="0.8"/>
    <path d="M168 12 C158 26 155 38 158 46 C161 50 175 50 178 46 C181 38 178 26 168 12 Z" fill="#74bd52" stroke="#e8f4e0" stroke-width="0.8"/><rect x="167" y="44" width="2" height="6" fill="#7a6a50"/>
    <path d="M146 34 C140 40 139 47 141 50 H151 C153 47 152 40 146 34 Z" fill="#6cb84a" stroke="#e8f4e0" stroke-width="0.8"/>
    <ellipse cx="8" cy="12" rx="6" ry="7" fill="#a8cf80"/>
    <circle cx="26" cy="3.5" r="3" fill="#b040b0"/><rect x="23" y="6" width="6" height="6" rx="2" fill="#b040b0"/>
    <circle cx="55" cy="2.5" r="3" fill="#e07a30"/><rect x="52" y="5" width="6" height="8" rx="2" fill="#e07a30"/>
    <circle cx="106" cy="2.5" r="3" fill="#8bc860"/><rect x="103" y="5" width="6" height="7" rx="2" fill="#8bc860"/>
    <circle cx="137" cy="3.5" r="3" fill="#3aa83a"/><rect x="134" y="6" width="6" height="7" rx="2" fill="#3aa83a"/>
    <circle cx="5" cy="16" r="3" fill="#f0e040"/><rect x="2" y="19" width="6" height="9" rx="2" fill="#f0e040"/>
    <circle cx="25" cy="32" r="3" fill="#f0a070"/><rect x="22" y="35" width="6" height="8" rx="2" fill="#f0a070"/>
    <circle cx="156" cy="30" r="3" fill="#40a8e0"/><rect x="153" y="33" width="6" height="8" rx="2" fill="#40a8e0"/>
    <circle cx="172" cy="16" r="3" fill="#2a70c0"/><rect x="169" y="19" width="6" height="9" rx="2" fill="#2a70c0"/>
  </svg>
  <div class="abs wtx" style="left:22px;top:9px;font-size:17px;line-height:19px;letter-spacing:0.2px">多様な主体による</div>
  <div class="abs wtx" style="left:55px;top:28px;font-size:17px;line-height:19px;letter-spacing:-1.2px">地域づくり</div>
</div>
<div class="bn" style="top:594px;height:49px;width:178px;border-top:1px solid #d8d8d8;background:linear-gradient(#fbfdfe 0,#e6f3f7 35%,#8ccadb 100%)">
  <div class="abs" style="left:0;top:6px;width:178px;text-align:center;font-size:15px;line-height:18px;color:#29566a;font-weight:bold;letter-spacing:0.8px;white-space:nowrap">防災・減災対策等<br>強化事業推進費</div>
</div>
<div class="bn" style="top:653px;height:46px;background:#dae9f3;border:1px solid #8bb1d0">
  <svg class="abs" style="left:0;top:0" width="178" height="44" viewBox="0 0 178 44">
    <ellipse cx="105" cy="27" rx="72" ry="15" fill="#a8d07a"/>
    <ellipse cx="112" cy="31" rx="56" ry="10" fill="#6aaa48"/>
    <ellipse cx="98" cy="16" rx="30" ry="4" fill="#d8e6c8"/>
    <path d="M40 28 Q90 22 150 30" stroke="#c0c4b8" stroke-width="1.6" fill="none"/>
    <g stroke="#9aa6c8" stroke-width="0.6">
    <path d="M17.5 20 C17.5 14 16 7 10 7 C4 7 2 12 4 15 C2 16 2 20 4 20 Z" fill="#b0c0e2"/>
    <path d="M17.5 20 C17.5 14 19 7 25 7 C31 7 33 12 31 15 C33 16 33 20 31 20 Z" fill="#c0b0da"/>
    <path d="M17.5 21 C17.5 27 16 36 10 36 C4 36 2 31 4 28 C2 27 2 21 4 21 Z" fill="#f0b8b4"/>
    <path d="M17.5 21 C17.5 27 19 36 25 36 C31 36 33 31 31 28 C33 27 33 21 31 21 Z" fill="#f8d0b2"/>
    </g>
    <circle cx="144" cy="12" r="5" fill="#dcc8e4" stroke="#a8a0c8" stroke-width="0.6"/>
    <circle cx="160" cy="32" r="11.5" fill="#f6d838" stroke="#e0b020" stroke-width="1"/>
    <path d="M152 28 Q160 25 160 29 Q160 25 168 28 V37 Q160 34 160 38 Q160 34 152 37 Z" fill="#fff8d0" stroke="#2a2a40" stroke-width="1.2"/>
  </svg>
  <div class="abs" style="left:28px;top:4px;font-size:15px;line-height:20px;color:#142a4e;white-space:nowrap;letter-spacing:0.4px;-webkit-text-stroke:0.9px #142a4e;font-style:italic">「小さな拠点」</div>
  <div class="abs" style="left:52px;top:22px;font-size:15px;line-height:20px;color:#142a4e;white-space:nowrap;letter-spacing:0;-webkit-text-stroke:0.9px #142a4e;font-style:italic">ガイドブック</div>
</div>
<div class="bn" style="top:709px;height:50px;background:radial-gradient(circle at 20% 40%,#4479d8,#3366cc 70%)">
  <svg class="abs" style="left:0;top:0" width="180" height="50" viewBox="0 0 180 50">
    <g fill="#dfe8ff" opacity="0.8"><circle cx="8" cy="37" r="0.8"/><circle cx="20" cy="42" r="0.6"/><circle cx="152" cy="14" r="1"/><circle cx="168" cy="10" r="0.8"/><circle cx="160" cy="26" r="1"/><circle cx="140" cy="36" r="0.7"/><circle cx="175" cy="40" r="0.6"/><circle cx="130" cy="8" r="0.6"/><circle cx="34" cy="20" r="0.6"/><circle cx="12" cy="8" r="0.5"/></g>
    <g fill="none" stroke="#fff" stroke-width="2.2" stroke-linecap="round">
      <path d="M44 6 C33 5 28 13 28 21 C28 30 34 36 42 36"/>
      <path d="M53 36 V47"/>
      <path d="M98 9 L136 43 M128 14 L110 36"/>
      <circle cx="141" cy="27" r="7.5" stroke-width="2"/>
      <circle cx="153" cy="28" r="5" stroke-width="1.6"/>
    </g>
    <text x="43" y="13" fill="#fff" font-size="6.5" font-family="Liberation Sans" font-style="italic">eo Spatial</text>
    <text x="41" y="35" fill="#fff" stroke="#fff" stroke-width="0.7" font-size="24" font-family="Liberation Sans" letter-spacing="-2.5">空間</text>
    <text x="88" y="35" fill="#fff" stroke="#fff" stroke-width="0.6" font-size="19" font-family="Liberation Sans">E</text>
  </svg>
  <div class="abs" style="left:61px;top:39px;font-size:5.6px;line-height:7px;color:#fff;white-space:nowrap;font-weight:bold">地理空間情報科学で未来をつくる</div>
</div>
<div class="bn" style="top:770px;height:40px;width:178px;border-top:1px solid #cfe3ea;background:linear-gradient(90deg,#ff9a35 0,#ff7a25 25%,#ff3a0a 48%,#ff6a20 72%,#ff9a35 100%)">
  <div class="abs" style="left:0;top:6px;width:178px;text-align:center;font-size:15px;line-height:18px;color:#fff;font-weight:bold;letter-spacing:1.4px;white-space:nowrap">官民連携基盤整備<br>推進調査費</div>
</div>
</body>
</html>
